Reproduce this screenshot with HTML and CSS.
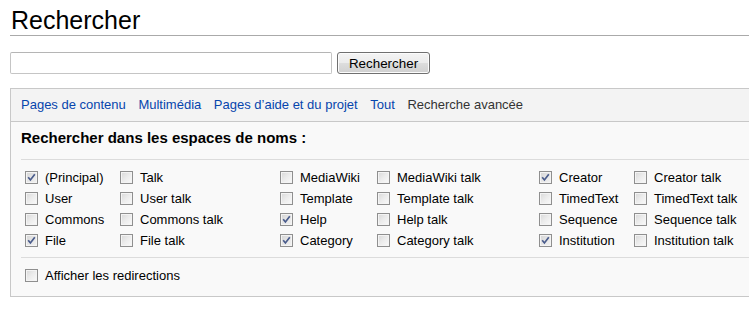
FILE: index.html
```html
<!DOCTYPE html>
<html lang="fr">
<head>
<meta charset="utf-8">
<title>Rechercher</title>
<link rel="stylesheet" href="styles.css">
</head>
<body>
<div class="page">
  <h1 class="title">Rechercher</h1>
  <form class="search">
    <input class="search-input" type="text">
    <button class="search-btn" type="button">Rechercher</button>
  </form>
  <div class="box">
    <div class="tabs">
      <a class="tab" href="#">Pages de contenu</a>
      <a class="tab" href="#">Multimédia</a>
      <a class="tab" href="#">Pages d’aide et du projet</a>
      <a class="tab" href="#">Tout</a>
      <span class="tab current">Recherche avancée</span>
    </div>
    <div class="panel">
      <h2 class="panel-title">Rechercher dans les espaces de noms :</h2>
      <div class="ns-grid">
        <label class="opt"><span class="cb on"><svg viewBox="0 0 13 13"><path d="M3.2 6.3 L5.4 9 L9.8 3.2"/></svg></span>(Principal)</label>
        <label class="opt"><span class="cb"></span>Talk</label>
        <label class="opt"><span class="cb"></span>MediaWiki</label>
        <label class="opt"><span class="cb"></span>MediaWiki talk</label>
        <label class="opt"><span class="cb on"><svg viewBox="0 0 13 13"><path d="M3.2 6.3 L5.4 9 L9.8 3.2"/></svg></span>Creator</label>
        <label class="opt"><span class="cb"></span>Creator talk</label>

        <label class="opt"><span class="cb"></span>User</label>
        <label class="opt"><span class="cb"></span>User talk</label>
        <label class="opt"><span class="cb"></span>Template</label>
        <label class="opt"><span class="cb"></span>Template talk</label>
        <label class="opt"><span class="cb"></span>TimedText</label>
        <label class="opt"><span class="cb"></span>TimedText talk</label>

        <label class="opt"><span class="cb"></span>Commons</label>
        <label class="opt"><span class="cb"></span>Commons talk</label>
        <label class="opt"><span class="cb on"><svg viewBox="0 0 13 13"><path d="M3.2 6.3 L5.4 9 L9.8 3.2"/></svg></span>Help</label>
        <label class="opt"><span class="cb"></span>Help talk</label>
        <label class="opt"><span class="cb"></span>Sequence</label>
        <label class="opt"><span class="cb"></span>Sequence talk</label>

        <label class="opt"><span class="cb on"><svg viewBox="0 0 13 13"><path d="M3.2 6.3 L5.4 9 L9.8 3.2"/></svg></span>File</label>
        <label class="opt"><span class="cb"></span>File talk</label>
        <label class="opt"><span class="cb on"><svg viewBox="0 0 13 13"><path d="M3.2 6.3 L5.4 9 L9.8 3.2"/></svg></span>Category</label>
        <label class="opt"><span class="cb"></span>Category talk</label>
        <label class="opt"><span class="cb on"><svg viewBox="0 0 13 13"><path d="M3.2 6.3 L5.4 9 L9.8 3.2"/></svg></span>Institution</label>
        <label class="opt"><span class="cb"></span>Institution talk</label>
      </div>
      <div class="redirects">
        <label class="opt"><span class="cb"></span>Afficher les redirections</label>
      </div>
    </div>
  </div>
</div>
</body>
</html>
```

FILE: styles.css
```css
html, body {
  margin: 0;
  padding: 0;
  background: #fff;
}

body {
  font-family: "Liberation Sans", Arial, sans-serif;
  font-size: 13px;
  color: #000;
}

.page {
  padding-left: 10px;
}

.title {
  margin: 5px 0 0 0;
  font-size: 25px;
  font-weight: normal;
  line-height: 30px;
  padding-left: 1px;
  border-bottom: 1px solid #aaa;
}

.search {
  display: flex;
  align-items: center;
  margin: 16px 0 0 0;
  height: 22px;
}

.search-input {
  box-sizing: border-box;
  width: 322px;
  height: 22px;
  margin: 0;
  border: 1px solid #c5c5c5;
  border-top-color: #b5b5b5;
  border-radius: 2px;
  background: #fff;
  padding: 0 3px;
  font: inherit;
}

.search-btn {
  box-sizing: border-box;
  margin: 0 0 0 5px;
  height: 22px;
  width: 93px;
  padding: 0;
  font-family: "Liberation Sans", Arial, sans-serif;
  font-size: 13.4px;
  color: #000;
  border: 1px solid #707070;
  border-radius: 3px;
  background: linear-gradient(#f4f4f4 0%, #ececec 48%, #dddddd 52%, #d0d0d0 100%);
  box-shadow: inset 0 0 0 1px #fcfcfc;
}

.box {
  margin-top: 14px;
  border: 1px solid #c8c8c8;
  border-right: none;
  background: #f9f9f9;
}

.tabs {
  display: flex;
  gap: 12.6px;
  padding: 8px 10px;
  line-height: 16px;
  background: #f3f3f3;
  border-bottom: 1px solid #c8c8c8;
}

.tab {
  color: #0645ad;
  text-decoration: none;
  white-space: nowrap;
}

.tab.current {
  color: #333;
}

.panel {
  padding: 7px 0 10px 10px;
}

.panel-title {
  margin: 0 0 12px 0;
  font-size: 15px;
  font-weight: bold;
  line-height: 18px;
}

.ns-grid {
  display: grid;
  grid-template-columns: 95px 160px 97px 162px 95px auto;
  grid-auto-rows: 21px;
  padding: 7px 0 6px 4px;
  border-top: 1px solid #dcdcdc;
  border-bottom: 1px solid #dcdcdc;
}

.redirects {
  padding: 7px 0 0 4px;
  height: 21px;
}

.opt {
  display: flex;
  align-items: center;
  height: 21px;
  line-height: 21px;
  white-space: nowrap;
  box-sizing: border-box;
}

.cb {
  box-sizing: border-box;
  flex: none;
  width: 13px;
  height: 13px;
  margin: 0 7px 0 0;
  border: 1px solid #8f8f8f;
  background: linear-gradient(135deg, #d8d8d8 0%, #ececec 50%, #fafafa 100%);
  box-shadow: inset 0 0 0 1px #f4f4f4;
}

.cb.on {
  background: linear-gradient(135deg, #d4d4d4 0%, #e6e6e6 50%, #f2f2f2 100%);
}

.cb svg {
  display: block;
  width: 13px;
  height: 13px;
  margin: -1px;
}

.cb svg path {
  fill: none;
  stroke: #4a5c8c;
  stroke-width: 1.7;
}
```
